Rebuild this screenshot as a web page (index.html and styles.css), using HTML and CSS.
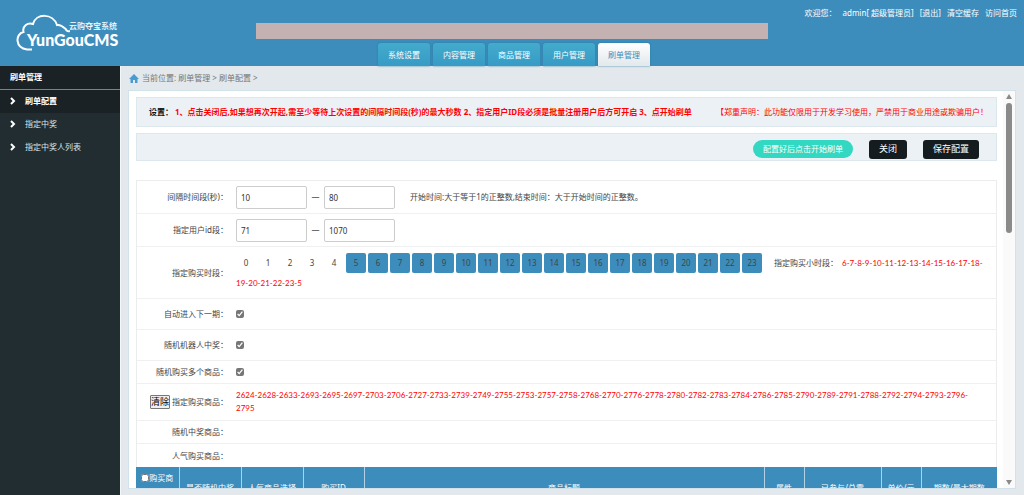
FILE: index.html
```html
<!DOCTYPE html>
<html lang="zh-CN">
<head>
<meta charset="utf-8">
<title>YunGouCMS</title>
<link rel="stylesheet" href="styles.css">
</head>
<body>
<header class="header">
  <div class="logo">
    <svg class="logo-cloud" viewBox="0 0 54 38" fill="none" stroke="#fff" stroke-width="2"><path d="M16 35.500H11C-1 34 -1 20 7.500 18C6 12 12 8 17 10C20 -1 37 -1 41 11C46 10 49 15 51 16C49 15 51 18 54 17"/></svg>
    <div class="logo-text"><span class="logo-sub">云购夺宝系统</span><span class="logo-name">YunGouCMS</span></div>
  </div>
  <div class="header-center">
    <div class="notice"></div>
    <nav class="tabs">
      <a class="tab" href="#">系统设置</a>
      <a class="tab" href="#">内容管理</a>
      <a class="tab" href="#">商品管理</a>
      <a class="tab" href="#">用户管理</a>
      <a class="tab tab-on" href="#">刷单管理</a>
    </nav>
  </div>
  <div class="user"><span>欢迎您：</span><span>admin[ 超级管理员]</span><a href="#">[退出]</a><a href="#">清空缓存</a><a href="#">访问首页</a></div>
</header>
<div class="body">
  <aside class="side">
    <h2 class="side-title">刷单管理</h2>
    <nav>
      <a class="side-item side-on" href="#"><svg class="chev" viewBox="0 0 6 8"><path d="M1 1L4 4L1 7" fill="none" stroke="#fff" stroke-width="2"/></svg>刷单配置</a>
      <a class="side-item" href="#"><svg class="chev" viewBox="0 0 6 8"><path d="M1 1L4 4L1 7" fill="none" stroke="#fff" stroke-width="2"/></svg>指定中奖</a>
      <a class="side-item" href="#"><svg class="chev" viewBox="0 0 6 8"><path d="M1 1L4 4L1 7" fill="none" stroke="#fff" stroke-width="2"/></svg>指定中奖人列表</a>
    </nav>
  </aside>
  <main class="main">
    <div class="crumb"><svg class="home" viewBox="0 0 10 9"><path d="M5 0L10 5H8.500V9H6V6H4V9H1.500V5H0Z" fill="#4a9bd0"/></svg><span>当前位置: 刷单管理 &gt; 刷单配置 &gt;</span></div>
    <div class="frame">
      <div class="page">
        <div class="bar tip"><b>设置：</b><b class="red">1、点击关闭后,如果想再次开起,需至少等待上次设置的间隔时间段(秒)的最大秒数 2、指定用户ID段必须是批量注册用户后方可开启 3、点开始刷单</b><span class="claim">【郑重声明：此功能仅限用于开发学习使用，严禁用于商业用途或欺骗用户！</span></div>
        <div class="bar actions"><button class="start">配置好后点击开始刷单</button><button class="dark">关闭</button><button class="dark">保存配置</button></div>
        <div class="sheet">
          <div class="row r33"><label class="lab" for="t1">间隔时间段(秒)：</label><div class="val"><input class="box" id="t1" value="10"><span class="dash">—</span><input class="box" value="80" aria-label="结束时间"><span class="hint">开始时间:大于等于1的正整数,结束时间：大于开始时间的正整数。</span></div></div>
          <div class="row r33"><label class="lab" for="u1">指定用户id段：</label><div class="val"><input class="box" id="u1" value="71"><span class="dash">—</span><input class="box" value="1070" aria-label="结束用户"></div></div>
          <div class="row r52"><span class="lab">指定购买时段：</span><div class="hours"><button class="h">0</button><button class="h">1</button><button class="h">2</button><button class="h">3</button><button class="h">4</button><button class="h on">5</button><button class="h on">6</button><button class="h on">7</button><button class="h on">8</button><button class="h on">9</button><button class="h on">10</button><button class="h on">11</button><button class="h on">12</button><button class="h on">13</button><button class="h on">14</button><button class="h on">15</button><button class="h on">16</button><button class="h on">17</button><button class="h on">18</button><button class="h on">19</button><button class="h on">20</button><button class="h on">21</button><button class="h on">22</button><button class="h on">23</button><span class="hours-label">指定购买小时段：</span><span class="nums">6-7-8-9-10-11-12-13-14-15-16-17-18-<br>19-20-21-22-23-5</span></div></div>
          <div class="row r31"><label class="lab" for="c1">自动进入下一期：</label><div class="val"><input class="check" type="checkbox" id="c1" checked></div></div>
          <div class="row r31"><label class="lab" for="c2">随机机器人中奖：</label><div class="val"><input class="check" type="checkbox" id="c2" checked></div></div>
          <div class="row r23"><label class="lab" for="c3">随机购买多个商品：</label><div class="val"><input class="check" type="checkbox" id="c3" checked></div></div>
          <div class="row r37"><span class="lab"><button class="clear">清除</button>指定购买商品：</span><div class="goods">2624-2628-2633-2693-2695-2697-2703-2706-2727-2733-2739-2749-2755-2753-2757-2758-2768-2770-2776-2778-2780-2782-2783-2784-2786-2785-2790-2789-2791-2788-2792-2794-2793-2796-<br>2795</div></div>
          <div class="row r23"><span class="lab">随机中奖商品：</span></div>
          <div class="row r23"><span class="lab">人气购买商品：</span></div>
        </div>
        <table class="list">
          <colgroup><col class="w43"><col class="w62"><col class="w62"><col class="w61"><col><col class="w40"><col class="w77"><col class="w40"><col class="w76"></colgroup>
          <tr><th><label class="pick"><input type="checkbox" class="check">购买商品</label></th><th>是否随机中奖</th><th>人气商品选择</th><th>购买ID</th><th>商品标题</th><th>属性</th><th>已参与/总需</th><th>单价/元</th><th>期数/最大期数</th></tr>
        </table>
      </div>
      <div class="scroll"><svg class="arrow" viewBox="0 0 6 5"><path d="M3 0L6 5H0Z" fill="#8a8a8a"/></svg><div class="thumb"></div><svg class="arrow" viewBox="0 0 6 5"><path d="M3 5L6 0H0Z" fill="#8a8a8a"/></svg></div>
    </div>
  </main>
</div>
</body>
</html>
```
FILE: styles.css
```css
* { box-sizing: border-box; }
body { margin: 0; height: 100vh; display: flex; flex-direction: column; overflow: hidden; background: #e2e8eb; color: #444; font: 8px/12px "Noto Sans", "Noto Sans CJK SC", sans-serif; }
a { color: inherit; text-decoration: none; }
button, input { font: inherit; margin: 0; }

.header { flex: none; height: 66px; display: grid; grid-template-columns: 1fr 2fr 1fr; background: #3c8dbc; color: #fff; }
.logo { display: grid; padding: 14px 0 0 16px; align-content: start; justify-content: start; }
.logo-cloud { grid-area: 1 / 1; width: 54px; height: 38px; }
.logo-text { grid-area: 1 / 1; display: flex; flex-direction: column; padding: 6px 0 0 11px; }
.logo-sub { padding-left: 42px; font-weight: 500; line-height: 12px; }
.logo-name { font: 900 16px/16px Lato, sans-serif; }
.header-center { display: flex; flex-direction: column; justify-content: space-between; padding-top: 23px; }
.notice { height: 16px; background: #c4b1b1; }
.tabs { display: flex; justify-content: flex-end; gap: 3px; padding-right: 118px; }
.tab { width: 52px; height: 23px; line-height: 24px; text-align: center; border-radius: 3px 3px 0 0; background: linear-gradient(#43abcc, #379bc5); box-shadow: 0 0 2px #24759f; }
.tab-on { background: linear-gradient(#fff, #e2e8eb); color: #3c8dbc; }
.user { display: flex; justify-content: flex-end; gap: 6px; padding: 7px 7px 0 0; white-space: nowrap; }

.body { flex: 1; min-height: 0; display: flex; }
.side { flex: none; width: 120px; background: #222d32; color: #fff; }
.side-title { margin: 0; padding-left: 10px; height: 24px; font-size: 8px; line-height: 22px; background: #1a2226; border-bottom: 1px solid #70888c; }
.side-item { display: flex; align-items: center; gap: 9px; height: 23px; padding: 0 0 1px 10px; color: #dce4e8; }
.side-on { background: #1a2226; font-weight: bold; color: #fff; }
.chev { width: 6px; height: 8px; }

.main { flex: 1; min-width: 0; display: flex; flex-direction: column; padding: 0 8px 6px 7px; border-left: 1px solid #f4f7f8; }
.crumb { flex: none; display: flex; align-items: center; gap: 3px; height: 24px; padding-left: 1px; color: #777; }
.home { width: 10px; height: 9px; }
.frame { flex: 1; min-height: 0; display: flex; background: #fff; border: 1px solid #d2e2ea; }
.page { flex: 1; min-width: 0; overflow: hidden; padding: 6px 6px 0 7px; }
.bar { display: flex; align-items: center; background: #ecf1f6; border: 1px solid #dde7ee; white-space: nowrap; }
.tip { gap: 2px; height: 30px; padding: 0 8px 0 12px; color: #111; }
.red, .claim { color: #f00; }
.claim { margin-left: auto; }
.actions { justify-content: flex-end; gap: 16px; height: 28px; margin: 6px 0 19px; padding: 4px 17px 0 0; }
.start { height: 18px; padding: 0 10px; border: 0; border-radius: 9px; background: #32d8c1; color: #fff; }
.dark { height: 19px; padding: 0 10px; border: 0; border-radius: 3px; background: #151c20; color: #fff; font-size: 9px; }

.sheet { border: 1px solid #ececec; border-bottom: 0; }
.row { display: flex; align-items: center; border-bottom: 1px solid #f0f0f0; }
.row:last-child { border-bottom: 0; }
.r33 { height: 33px; }
.r52 { height: 52px; }
.r31 { height: 31px; }
.r23 { height: 23px; }
.r37 { height: 37px; }
.lab { flex: none; width: 91px; display: flex; align-items: center; justify-content: flex-end; gap: 2px; white-space: nowrap; }
.val { display: flex; align-items: center; margin-left: 8px; white-space: nowrap; }
.box { width: 71px; height: 23px; padding: 0 4px; border: 1px solid #ccc; border-radius: 2px; background: #fff; color: #333; }
.dash { width: 17px; text-align: center; }
.hint { margin-left: 15px; }
.hours { margin-left: 8px; line-height: 20px; white-space: nowrap; }
.h { width: 20px; height: 20px; margin-right: 2px; padding: 0; border: 0; border-radius: 2px; background: none; color: #444; }
.on { background: #3c8dbc; }
.hours-label { padding: 0 4px 0 10px; }
.nums, .goods { color: #f00; font-family: Lato, "Noto Sans", sans-serif; }
.goods { margin-left: 8px; line-height: 13px; white-space: nowrap; }
.check { width: 8px; height: 8px; accent-color: #767676; }
.clear { height: 14px; padding: 0; border: 1px solid #777; border-radius: 1px; background: #efefef; color: #000; font-size: 9px; line-height: 12px; }

.list { width: 100%; table-layout: fixed; border-collapse: collapse; background: #3c8dbc; color: #fff; }
.list th { height: 41px; padding: 0 2px; font-weight: normal; line-height: 20px; border-left: 1px solid #b1d1e4; overflow: hidden; white-space: nowrap; }
.list th:first-child { border-left: 0; white-space: normal; }
.pick .check { vertical-align: middle; }
.w43 { width: 43px; }
.w62 { width: 62px; }
.w61 { width: 61px; }
.w40 { width: 40px; }
.w77 { width: 77px; }
.w76 { width: 76px; }

.scroll { flex: none; width: 12px; display: flex; flex-direction: column; align-items: center; padding: 3px 0; background: #fafafa; }
.arrow { width: 6px; height: 5px; }
.thumb { width: 6px; height: 130px; margin: 4px 0 auto; border-radius: 3px; background: #8a8a8a; }
```
